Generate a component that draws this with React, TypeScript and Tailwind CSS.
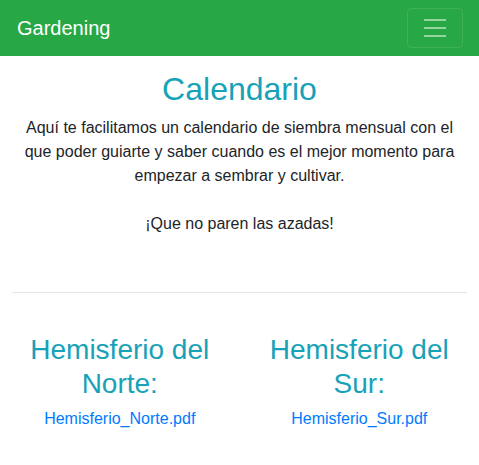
export default function App() {
  return (
    <div className="min-h-[465px] bg-white text-[#212529]" style={{ fontFamily: '"Liberation Sans", Arial, sans-serif' }}>
      <nav className="h-14 bg-[#28a745] pl-[17px] pr-4 flex items-center justify-between">
        <span className="text-[20px] leading-[30px] text-white">Gardening</span>
        <button className="w-[56px] h-[40px] border border-white/10 rounded-[4px] flex items-center justify-center">
          <svg width="30" height="30" viewBox="0 0 30 30">
            <path d="M4 7h22M4 15h22M4 23h22" stroke="rgba(255,255,255,0.5)" strokeWidth="2" strokeLinecap="butt" />
          </svg>
        </button>
      </nav>
      <div className="px-3 text-center">
        <h1 className="mt-[14px] mb-2 text-[32px] leading-[1.2] text-[#17a2b8]">Calendario</h1>
        <p className="text-[16px] leading-[24px]">
          Aquí te facilitamos un calendario de siembra mensual con el que poder guiarte y saber cuando es el mejor momento para empezar a sembrar y cultivar.
          <br />
          <br />
          ¡Que no paren las azadas!
        </p>
        <hr className="mt-[56px] border-0 border-t border-black/10" />
        <div className="-mx-3 grid grid-cols-2 mt-[40px]">
          <div className="px-3">
            <h3 className="text-[28px] leading-[1.2] text-[#17a2b8] mb-[6px]">Hemisferio del Norte:</h3>
            <a className="text-[16px] leading-[24px] text-[#007bff]" href="#">Hemisferio_Norte.pdf</a>
          </div>
          <div className="px-3">
            <h3 className="text-[28px] leading-[1.2] text-[#17a2b8] mb-[6px]">Hemisferio del Sur:</h3>
            <a className="text-[16px] leading-[24px] text-[#007bff]" href="#">Hemisferio_Sur.pdf</a>
          </div>
        </div>
      </div>
    </div>
  );
}
